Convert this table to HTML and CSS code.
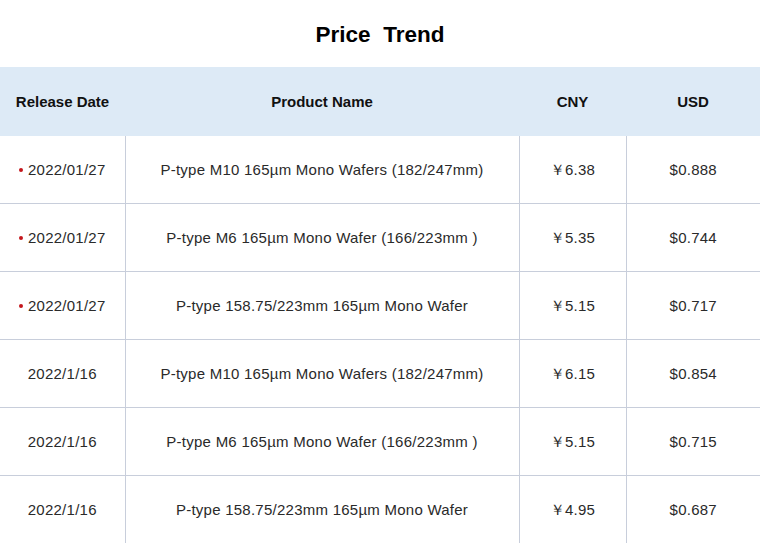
FILE: index.html
```html
<!DOCTYPE html>
<html>
<head>
<meta charset="utf-8">
<link rel="stylesheet" href="styles.css">
</head>
<body>
<h1 class="title">Price  Trend</h1>
<table class="prices">
<thead>
<tr><th class="c-date">Release Date</th><th class="c-name">Product Name</th><th class="c-cny">CNY</th><th class="c-usd">USD</th></tr>
</thead>
<tbody>
<tr><td><span class="dot"></span>2022/01/27</td><td>P-type M10 165µm Mono Wafers (182/247mm)</td><td>￥6.38</td><td>$0.888</td></tr>
<tr><td><span class="dot"></span>2022/01/27</td><td>P-type M6 165µm Mono Wafer (166/223mm )</td><td>￥5.35</td><td>$0.744</td></tr>
<tr><td><span class="dot"></span>2022/01/27</td><td>P-type 158.75/223mm 165µm Mono Wafer</td><td>￥5.15</td><td>$0.717</td></tr>
<tr><td>2022/1/16</td><td>P-type M10 165µm Mono Wafers (182/247mm)</td><td>￥6.15</td><td>$0.854</td></tr>
<tr><td>2022/1/16</td><td>P-type M6 165µm Mono Wafer (166/223mm )</td><td>￥5.15</td><td>$0.715</td></tr>
<tr><td>2022/1/16</td><td>P-type 158.75/223mm 165µm Mono Wafer</td><td>￥4.95</td><td>$0.687</td></tr>
</tbody>
</table>
</body>
</html>
```
FILE: styles.css
```css
html, body { margin: 0; padding: 0; background: #fff; }
body { font-family: "Liberation Sans", Arial, sans-serif; color: #222; }
.title {
  margin: 0;
  height: 67px;
  line-height: 70px;
  text-align: center;
  font-size: 22.5px;
  font-weight: bold;
  white-space: pre;
  color: #000;
}
.prices { width: 760px; border-collapse: collapse; table-layout: fixed; }
.prices th {
  background: #ddeaf6;
  height: 69px;
  padding: 0;
  font-size: 15px;
  font-weight: bold;
  color: #111;
  text-align: center;
}
.c-date { width: 125px; }
.c-name { width: 394px; }
.c-cny { width: 107px; }
.c-usd { width: 134px; }
.prices td {
  height: 67px;
  padding: 0;
  text-align: center;
  font-size: 15px;
  line-height: 20px;
  letter-spacing: 0.25px;
  color: #2a2a2a;
  border-bottom: 1px solid #c8cedb;
  border-left: 1px solid #c8cedb;
}
.prices td:first-child { border-left: none; }
.dot {
  display: inline-block;
  width: 4px; height: 4px;
  border-radius: 50%;
  background: #c4161c;
  margin-right: 5px;
  vertical-align: middle;
  position: relative;
  top: -1px;
}
```
